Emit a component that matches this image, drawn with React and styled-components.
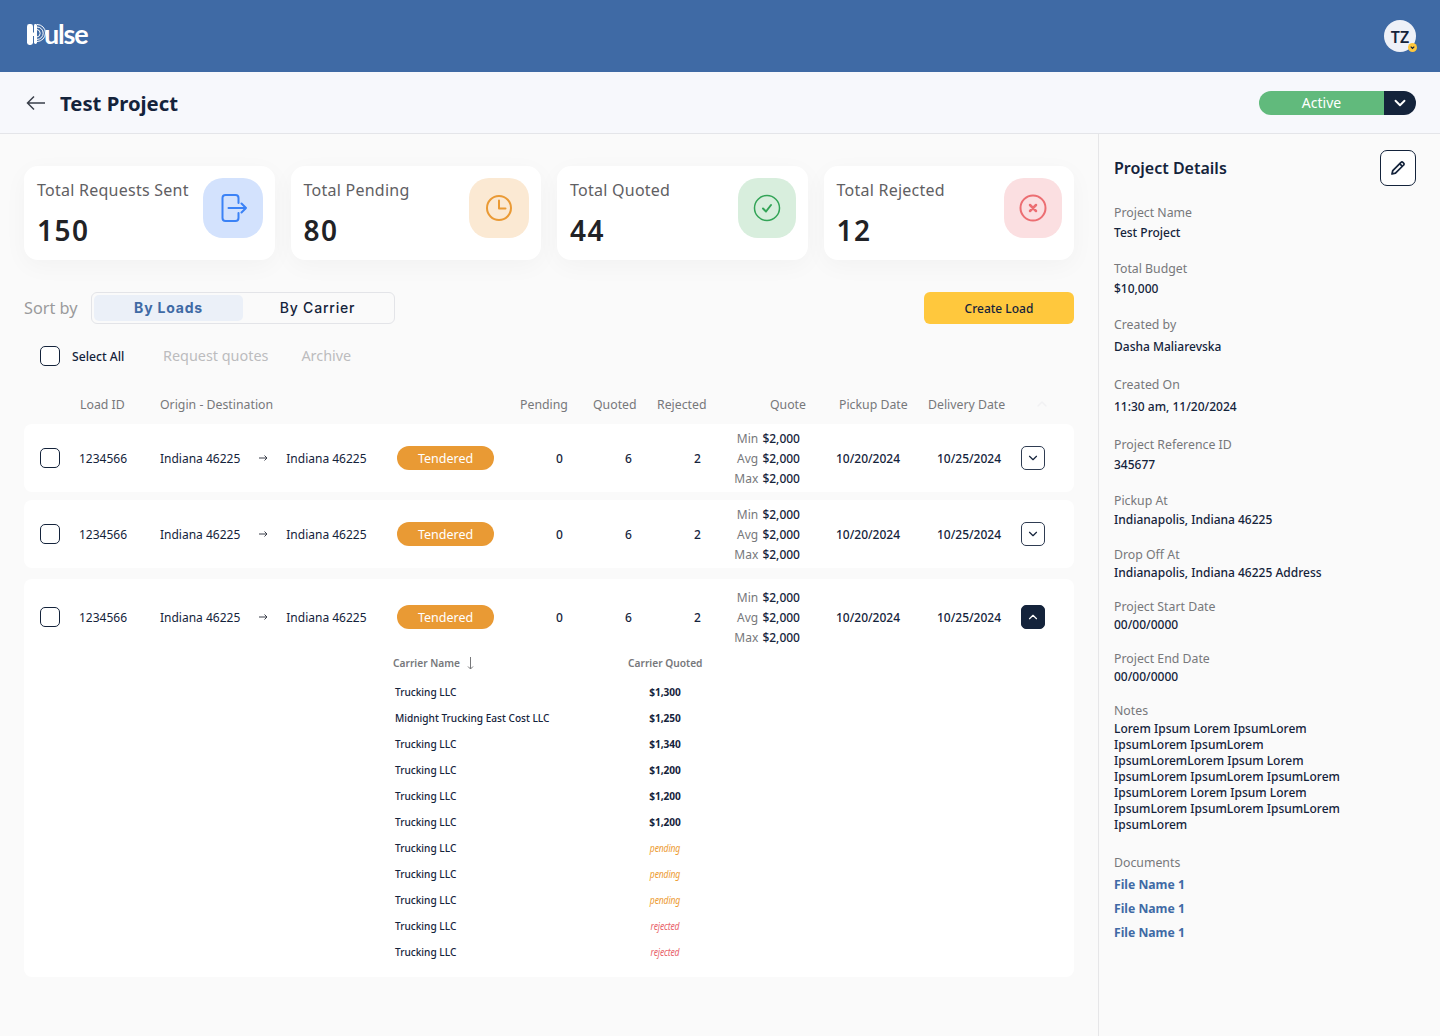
import React from 'react'
import styled, { createGlobalStyle } from 'styled-components'

const GlobalStyle = createGlobalStyle`
  * { box-sizing: border-box; }
  html, body { margin: 0; padding: 0; }
  body {
    font-family: "Noto Sans", "Open Sans", sans-serif;
    background: #fafafa;
    color: #14233b;
  }
`

const Page = styled.div`
  width: 1440px;
  height: 1036px;
  overflow: hidden;
  display: flex;
  flex-direction: column;
`

const TopBar = styled.header`
  height: 72px;
  flex: none;
  background: #3f6aa5;
  display: flex;
  align-items: center;
  justify-content: space-between;
  padding: 0 24px 2px 27px;
`

const Logo = styled.div`
  display: flex;
  align-items: center;
  color: #fff;
  height: 24px;
  svg { flex: none; }
`

const LogoText = styled.span`
  font-family: "Lato", sans-serif;
  font-size: 27px;
  font-weight: 700;
  letter-spacing: -1.2px;
  line-height: 24px;
  margin-left: -2px;
  position: relative;
  top: -1px;
`

const Avatar = styled.div`
  position: relative;
  width: 32px;
  height: 32px;
  margin-top: 2px;
  padding-top: 2px;
  border-radius: 50%;
  background: #eef1f8;
  color: #14233b;
  font-weight: 600;
  font-size: 16px;
  display: flex;
  align-items: center;
  justify-content: center;
`

const AvatarBadge = styled.span`
  position: absolute;
  right: -1px;
  bottom: 0;
  width: 9px;
  height: 9px;
  border-radius: 50%;
  background: #ffc83d;
  display: flex;
  align-items: center;
  justify-content: center;
`

const SubBar = styled.div`
  height: 62px;
  flex: none;
  background: #f7f8fc;
  border-bottom: 1px solid #e4e5e9;
  display: flex;
  align-items: center;
  padding: 0 24px 0 26px;
`

const BackButton = styled.span`
  display: flex;
  color: #3a3f4a;
  margin-right: 14px;
`

const PageTitle = styled.h1`
  margin: 1px 0 0;
  font-size: 20.3px;
  line-height: 28px;
  font-weight: 700;
  color: #14233b;
  flex: 1;
`

const StatusSelect = styled.div`
  width: 157px;
  height: 24px;
  border-radius: 12px;
  overflow: hidden;
  display: flex;
`

const StatusLabel = styled.span`
  flex: 1;
  background: #61ba7c;
  color: #fff;
  font-size: 14px;
  font-weight: 400;
  display: flex;
  align-items: center;
  justify-content: center;
`

const StatusCaret = styled.span`
  width: 32px;
  background: #14233b;
  color: #fff;
  display: flex;
  align-items: center;
  justify-content: center;
`

const Body = styled.div`
  flex: 1;
  min-height: 0;
  display: flex;
`

const Main = styled.main`
  width: 1098px;
  flex: none;
  padding: 32px 24px 0;
`

const CardGrid = styled.section`
  display: grid;
  grid-template-columns: repeat(4, 250.5px);
  column-gap: 16px;
`

const StatCard = styled.div`
  height: 94px;
  background: #fff;
  border-radius: 14px;
  box-shadow: 0 6px 24px rgba(0, 0, 0, 0.035);
  padding: 12px 12px 0 13px;
  display: flex;
  justify-content: space-between;
`

const StatLabel = styled.div`
  font-size: 16px;
  letter-spacing: 0.25px;
  line-height: 24px;
  color: #5f6063;
  white-space: nowrap;
`

const StatValue = styled.div`
  font-size: 28px;
  line-height: 36px;
  font-weight: 600;
  letter-spacing: 1.5px;
  color: #212226;
  margin-top: 10px;
`

const StatIcon = styled.div`
  width: ${p => p.$w}px;
  flex: none;
  height: 60px;
  border-radius: 20px;
  background: ${p => p.$bg};
  color: ${p => p.$fg};
  display: flex;
  align-items: center;
  justify-content: center;
`

const SortRow = styled.div`
  margin-top: 32px;
  height: 32px;
  display: flex;
  align-items: center;
`

const SortLabel = styled.span`
  width: 67px;
  font-size: 16.3px;
  white-space: nowrap;
  color: #9a9a9c;
`

const Toggle = styled.div`
  width: 304px;
  height: 32px;
  padding: 2px;
  border: 1px solid #e3e4e8;
  border-radius: 6px;
  display: flex;
  background: #fafafa;
`

const ToggleTab = styled.span`
  width: 150px;
  padding-bottom: 1px;
  font-family: "Inter", sans-serif;
  font-size: 14px;
  letter-spacing: 0.8px;
  font-weight: ${p => (p.$active ? 700 : 500)};
  color: ${p => (p.$active ? '#3f6aa5' : '#14233b')};
  background: ${p => (p.$active ? '#ebf0f8' : 'transparent')};
  border-radius: 5px;
  display: flex;
  align-items: center;
  justify-content: center;
`

const CreateButton = styled.button`
  margin-left: auto;
  width: 150px;
  height: 32px;
  border: 0;
  border-radius: 6px;
  background: #ffc83d;
  color: #14233b;
  font: 500 12px "Noto Sans", sans-serif;
`

const ActionRow = styled.div`
  margin-top: 22px;
  padding-left: 16px;
  height: 20px;
  display: flex;
  align-items: center;
`

const Checkbox = styled.span`
  display: block;
  width: 20px;
  height: 20px;
  border: 1px solid #14233b;
  border-radius: 5px;
  background: #fff;
`

const SelectAll = styled.span`
  margin-left: 12px;
  width: 91px;
  font-size: 12.2px;
  font-weight: 500;
`

const FadedAction = styled.span`
  font-size: 14.4px;
  line-height: 20px;
  color: #bcbcbe;
  margin-right: 33px;
`

const HeadRow = styled.div`
  margin-top: 28px;
  height: 20px;
  display: grid;
  grid-template-columns: 56px 80px 360px 73px 64px 74px 75px 33px 89px 78px 1fr;
  align-items: center;
  font-size: 12.3px;
  color: #77787b;
  white-space: nowrap;
`

const HeadRight = styled.span`
  text-align: right;
`

const HeadCaret = styled.span`
  display: flex;
  padding-left: 28px;
  color: #f1f1f3;
`

const RowList = styled.div`
  margin-top: 10px;
  display: flex;
  flex-direction: column;
`

const LoadCard = styled.article`
  background: #fff;
  border-radius: 8px;
  margin-bottom: ${p => p.$mb}px;
`

const LoadRow = styled.div`
  height: ${p => (p.$open ? 76 : 68)}px;
  display: grid;
  grid-template-columns: 55px 81px 237px 128px 69px 69px 69px 68px 136px 66px 1fr;
  align-items: center;
  font-size: 12px;
  color: #14233b;
  white-space: nowrap;
`

const CheckCell = styled.span`
  padding-left: 16px;
`

const RouteCell = styled.span`
  display: flex;
  align-items: center;
`

const RouteArrow = styled.span`
  display: flex;
  width: 46px;
  padding-left: 19px;
  color: #3a3f4a;
`

const TenderedPill = styled.span`
  width: 97px;
  height: 24px;
  border-radius: 12px;
  background: #e99a34;
  color: #fff;
  font-size: 12.5px;
  display: flex;
  align-items: center;
  justify-content: center;
`

const CenterCell = styled.span`
  text-align: center;
  font-weight: 500;
`

const QuoteCell = styled.div`
  text-align: right;
  line-height: 20px;
  padding-top: 2px;
  word-spacing: 1px;
  b { font-weight: 500; }
  i { font-style: normal; color: #77787b; }
`

const ExpandButton = styled.span`
  width: 24px;
  height: 24px;
  margin-left: 19px;
  border-radius: 5px;
  border: 1px solid ${p => (p.$open ? '#14233b' : '#2f3c52')};
  background: ${p => (p.$open ? '#14233b' : '#fff')};
  color: ${p => (p.$open ? '#fff' : '#14233b')};
  display: flex;
  align-items: center;
  justify-content: center;
`

const CarrierTable = styled.div`
  padding: 0 0 12px 369px;
`

const CarrierHead = styled.div`
  height: 14px;
  margin-top: 1px;
  margin-bottom: 9px;
  display: grid;
  grid-template-columns: 235px 74px;
  align-items: center;
  font-size: 10.2px;
  font-weight: 600;
  color: #77787b;
  white-space: nowrap;
`

const CarrierNameHead = styled.span`
  display: flex;
  align-items: center;
  gap: 7px;
`

const CarrierRow = styled.div`
  height: 26px;
  padding-left: 2px;
  display: grid;
  grid-template-columns: 233px 74px;
  align-items: center;
  font-size: 10.1px;
  font-weight: 500;
  color: #14233b;
  white-space: nowrap;
`

const CarrierQuote = styled.span`
  text-align: center;
  font-weight: ${p => (p.$status ? 400 : 700)};
  font-style: ${p => (p.$status ? 'italic' : 'normal')};
  color: ${p => (p.$status === 'pending' ? '#ed9b33' : p.$status === 'rejected' ? '#e9636b' : '#14233b')};
  ${p => p.$status && 'font-size: 10.5px; letter-spacing: -0.2px; transform: scaleX(0.82);'}
`

const Side = styled.aside`
  flex: 1;
  border-left: 1px solid #e6e6e8;
  padding: 16px 24px 0 15px;
`

const SideHead = styled.div`
  height: 36px;
  display: flex;
  align-items: center;
  justify-content: space-between;
  margin-bottom: 17px;
`

const SideTitle = styled.h2`
  margin: 0;
  font-size: 16px;
  font-weight: 600;
  color: #14233b;
`

const EditButton = styled.span`
  width: 36px;
  height: 36px;
  border: 1px solid #14233b;
  border-radius: 7px;
  background: #fff;
  color: #14233b;
  display: flex;
  align-items: center;
  justify-content: center;
`

const Field = styled.div`
  margin-bottom: ${p => p.$mb}px;
`

const FieldLabel = styled.div`
  font-size: 12.3px;
  line-height: 20px;
  color: #77787b;
`

const FieldValue = styled.div`
  font-size: 12px;
  line-height: ${p => p.$lh || 20}px;
  margin-top: ${p => p.$mt || 0}px;
  max-width: 240px;
  font-weight: 500;
  color: #14233b;
`

const FileLink = styled.a`
  display: block;
  font-size: 12.2px;
  line-height: 24px;
  font-weight: 700;
  color: #3f6aa5;
`

const Chevron = ({ up, size = 14, width = 2 }) => (
  <svg width={size} height={size} viewBox="0 0 24 24" fill="none" stroke="currentColor" strokeWidth={width} strokeLinecap="round" strokeLinejoin="round">
    <path d={up ? 'M6 15l6-6 6 6' : 'M6 9l6 6 6-6'} />
  </svg>
)

const PulseMark = () => (
  <svg width="19" height="24" viewBox="0 0 19 24" fill="none">
    <rect x="0" y="1" width="6" height="21" rx="2.4" fill="#fff" />
    <rect x="3" y="9.5" width="6" height="3.5" fill="#fff" />
    <rect x="7" y="1" width="3" height="20" rx="1.4" fill="#fff" />
    <g stroke="#fff" strokeWidth="1" fill="none">
      <path d="M10 1.5a8.5 8.5 0 0 1 0 17" />
      <path d="M10 4a6.2 6.2 0 0 1 0 12.4" />
      <path d="M10 6.5a3.8 3.8 0 0 1 0 7.5" />
    </g>
  </svg>
)

const stats = [
  {
    label: 'Total Requests Sent', value: 150, w: 60, bg: '#d3e2fd', fg: '#3b82f6',
    icon: (
      <>
        <path d="M19.5 9V4a3 3 0 0 0-3-3h-10a3 3 0 0 0-3 3v20a3 3 0 0 0 3 3h10a3 3 0 0 0 3-3v-5" />
        <path d="M9.5 14H27M22.5 9.5L27 14l-4.5 4.5" />
      </>
    ),
  },
  {
    label: 'Total Pending', value: 80, w: 60, bg: '#fbe9d3', fg: '#ea9a35',
    icon: (
      <>
        <circle cx="14" cy="14" r="12" />
        <path d="M14 6.5V14.5h6.5" />
      </>
    ),
  },
  {
    label: 'Total Quoted', value: 44, w: 58, bg: '#d8eedd', fg: '#33a457',
    icon: (
      <>
        <circle cx="14" cy="14" r="12.5" strokeWidth="1.5" />
        <path d="M10 14.5l3 3 5-6.5" />
      </>
    ),
  },
  {
    label: 'Total Rejected', value: 12, w: 58, bg: '#fbdfe1', fg: '#ec6e72',
    icon: (
      <>
        <circle cx="14" cy="14" r="12.5" />
        <path d="M11 11l6 6M17 11l-6 6" strokeWidth="2.5" />
      </>
    ),
  },
]

const loads = [
  { id: 1, open: false, mb: 8 },
  { id: 2, open: false, mb: 11 },
  { id: 3, open: true, mb: 0 },
]

const carriers = [
  { name: 'Trucking LLC', quote: '$1,300' },
  { name: 'Midnight Trucking East Cost LLC', quote: '$1,250' },
  { name: 'Trucking LLC', quote: '$1,340' },
  { name: 'Trucking LLC', quote: '$1,200' },
  { name: 'Trucking LLC', quote: '$1,200' },
  { name: 'Trucking LLC', quote: '$1,200' },
  { name: 'Trucking LLC', status: 'pending' },
  { name: 'Trucking LLC', status: 'pending' },
  { name: 'Trucking LLC', status: 'pending' },
  { name: 'Trucking LLC', status: 'rejected' },
  { name: 'Trucking LLC', status: 'rejected' },
]

const details = [
  { label: 'Project Name', value: 'Test Project', mb: 16 },
  { label: 'Total Budget', value: '$10,000', mb: 16 },
  { label: 'Created by', value: 'Dasha Maliarevska', mt: 2, mb: 18 },
  { label: 'Created On', value: '11:30 am, 11/20/2024', mt: 2, mb: 18 },
  { label: 'Project Reference ID', value: '345677', mb: 16 },
  { label: 'Pickup At', value: 'Indianapolis, Indiana 46225', mt: -1, mb: 15 },
  { label: 'Drop Off At', value: 'Indianapolis, Indiana 46225 Address', mt: -2, mb: 14 },
  { label: 'Project Start Date', value: '00/00/0000', mt: -2, mb: 14 },
  { label: 'Project End Date', value: '00/00/0000', mt: -2, mb: 14 },
]

const notes = 'Lorem Ipsum Lorem IpsumLorem IpsumLorem IpsumLorem IpsumLoremLorem Ipsum Lorem IpsumLorem IpsumLorem IpsumLorem IpsumLorem Lorem Ipsum Lorem IpsumLorem IpsumLorem IpsumLorem IpsumLorem'

function Load({ open, mb }) {
  return (
    <LoadCard $mb={mb}>
      <LoadRow $open={open}>
        <CheckCell><Checkbox /></CheckCell>
        <span>1234566</span>
        <RouteCell>
          Indiana 46225
          <RouteArrow>
            <svg width="9" height="8" viewBox="0 0 9 8" fill="none" stroke="currentColor" strokeWidth="1">
              <path d="M0 4h8M5.5 1.5L8 4 5.5 6.5" />
            </svg>
          </RouteArrow>
          Indiana 46225
        </RouteCell>
        <TenderedPill>Tendered</TenderedPill>
        <CenterCell>0</CenterCell>
        <CenterCell>6</CenterCell>
        <CenterCell>2</CenterCell>
        <QuoteCell>
          <div><i>Min</i> <b>$2,000</b></div>
          <div><i>Avg</i> <b>$2,000</b></div>
          <div><i>Max</i> <b>$2,000</b></div>
        </QuoteCell>
        <CenterCell>10/20/2024</CenterCell>
        <CenterCell>10/25/2024</CenterCell>
        <ExpandButton $open={open}><Chevron up={open} /></ExpandButton>
      </LoadRow>
      {open && (
        <CarrierTable>
          <CarrierHead>
            <CarrierNameHead>
              Carrier Name
              <svg width="7" height="13" viewBox="0 0 7 13" fill="none" stroke="#77787b" strokeWidth="1">
                <path d="M3.5 0v12M1 9.5L3.5 12 6 9.5" />
              </svg>
            </CarrierNameHead>
            <span>Carrier Quoted</span>
          </CarrierHead>
          {carriers.map((c, i) => (
            <CarrierRow key={i}>
              <span>{c.name}</span>
              <CarrierQuote $status={c.status}>{c.quote || c.status}</CarrierQuote>
            </CarrierRow>
          ))}
        </CarrierTable>
      )}
    </LoadCard>
  )
}

export default function App() {
  return (
    <Page>
      <GlobalStyle />
      <TopBar>
        <Logo>
          <PulseMark />
          <LogoText>ulse</LogoText>
        </Logo>
        <Avatar>
          TZ
          <AvatarBadge>
            <svg width="7" height="7" viewBox="0 0 24 24" fill="none" stroke="#14233b" strokeWidth="4">
              <path d="M6 9l6 6 6-6" />
            </svg>
          </AvatarBadge>
        </Avatar>
      </TopBar>

      <SubBar>
        <BackButton>
          <svg width="20" height="16" viewBox="0 0 20 16" fill="none" stroke="currentColor" strokeWidth="1.5">
            <path d="M19 8H1.5M8 1.5L1.5 8 8 14.5" />
          </svg>
        </BackButton>
        <PageTitle>Test Project</PageTitle>
        <StatusSelect>
          <StatusLabel>Active</StatusLabel>
          <StatusCaret><Chevron size={18} width={2.5} /></StatusCaret>
        </StatusSelect>
      </SubBar>

      <Body>
        <Main>
          <CardGrid>
            {stats.map(s => (
              <StatCard key={s.label}>
                <div>
                  <StatLabel>{s.label}</StatLabel>
                  <StatValue>{s.value}</StatValue>
                </div>
                <StatIcon $w={s.w} $bg={s.bg} $fg={s.fg}>
                  <svg width="28" height="28" viewBox="0 0 28 28" fill="none" stroke="currentColor" strokeWidth="2" strokeLinecap="round" strokeLinejoin="round">
                    {s.icon}
                  </svg>
                </StatIcon>
              </StatCard>
            ))}
          </CardGrid>

          <SortRow>
            <SortLabel>Sort by</SortLabel>
            <Toggle>
              <ToggleTab $active>By Loads</ToggleTab>
              <ToggleTab>By Carrier</ToggleTab>
            </Toggle>
            <CreateButton>Create Load</CreateButton>
          </SortRow>

          <ActionRow>
            <Checkbox />
            <SelectAll>Select All</SelectAll>
            <FadedAction>Request quotes</FadedAction>
            <FadedAction>Archive</FadedAction>
          </ActionRow>

          <HeadRow>
            <span />
            <span>Load ID</span>
            <span>Origin - Destination</span>
            <span>Pending</span>
            <span>Quoted</span>
            <span>Rejected</span>
            <HeadRight>Quote</HeadRight>
            <span />
            <span>Pickup Date</span>
            <span>Delivery Date</span>
            <HeadCaret><Chevron up size={16} /></HeadCaret>
          </HeadRow>

          <RowList>
            {loads.map(l => <Load key={l.id} open={l.open} mb={l.mb} />)}
          </RowList>
        </Main>

        <Side>
          <SideHead>
            <SideTitle>Project Details</SideTitle>
            <EditButton>
              <svg width="16" height="16" viewBox="0 0 24 24" fill="none" stroke="currentColor" strokeWidth="2.6" strokeLinejoin="round">
                <path d="M3 21l1.2-5.2L16.5 3.5a2 2 0 0 1 2.9 0l1.1 1.1a2 2 0 0 1 0 2.9L8.2 19.8 3 21z" />
                <path d="M14.5 5.5l4 4" />
              </svg>
            </EditButton>
          </SideHead>
          {details.map(d => (
            <Field key={d.label} $mb={d.mb}>
              <FieldLabel>{d.label}</FieldLabel>
              <FieldValue $mt={d.mt}>{d.value}</FieldValue>
            </Field>
          ))}
          <Field $mb={20}>
            <FieldLabel>Notes</FieldLabel>
            <FieldValue $lh={16}>{notes}</FieldValue>
          </Field>
          <Field $mb={0}>
            <FieldLabel>Documents</FieldLabel>
            <FileLink>File Name 1</FileLink>
            <FileLink>File Name 1</FileLink>
            <FileLink>File Name 1</FileLink>
          </Field>
        </Side>
      </Body>
    </Page>
  )
}
